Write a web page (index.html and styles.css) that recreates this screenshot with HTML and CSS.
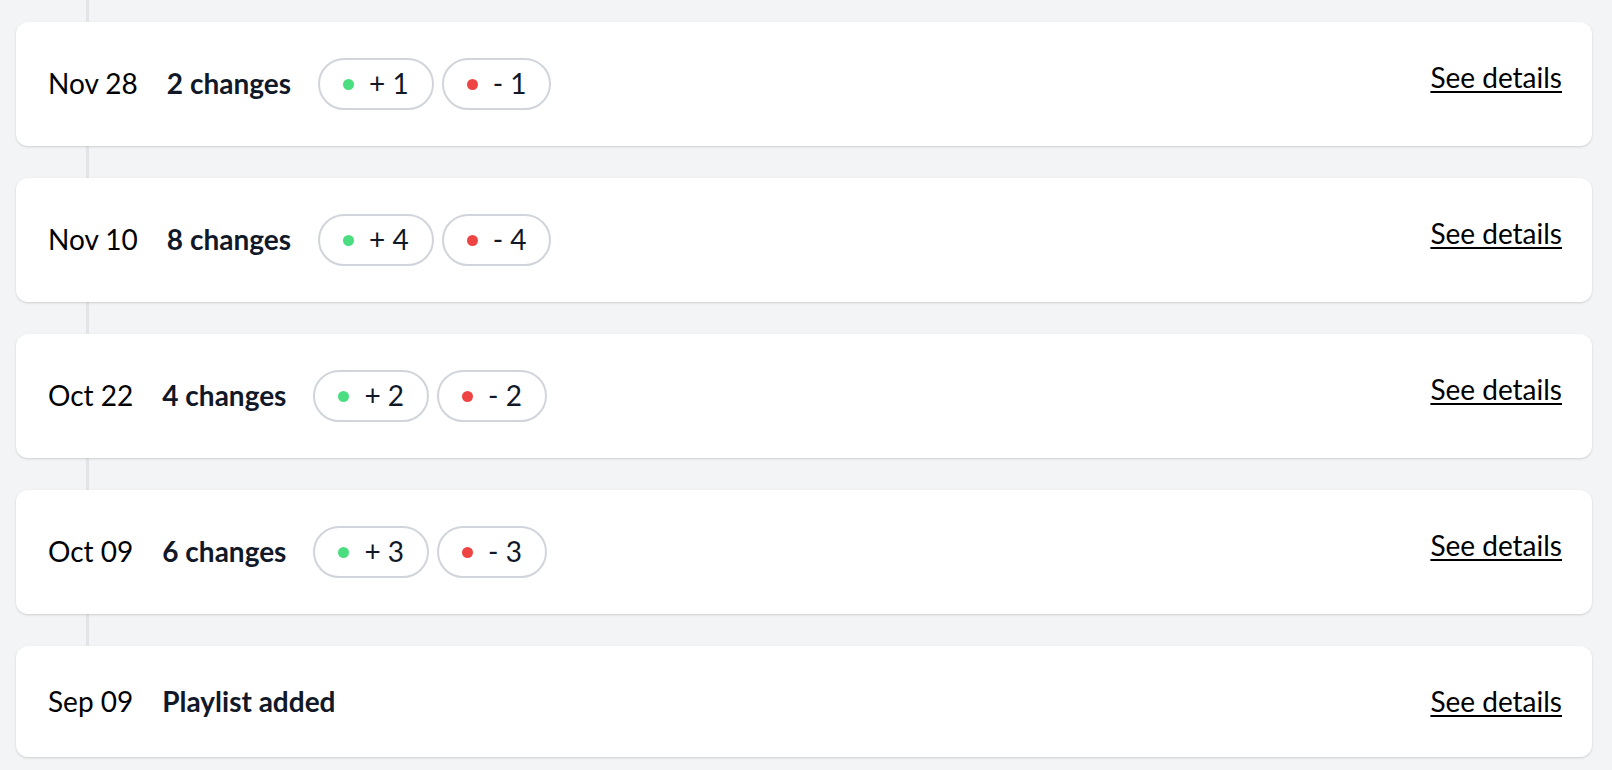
FILE: index.html
```html
<!DOCTYPE html>
<html lang="en">
<head>
<meta charset="utf-8">
<title>Playlist history</title>
<link rel="stylesheet" href="styles.css">
</head>
<body>
<main class="timeline">
  <div class="card">
    <div class="card-main">
      <span class="date">Nov 28</span>
      <span class="summary">2 changes</span>
      <div class="badges">
        <span class="badge"><span class="dot dot-add"></span>+ 1</span>
        <span class="badge"><span class="dot dot-remove"></span>- 1</span>
      </div>
    </div>
    <a class="details" href="#">See details</a>
  </div>
  <div class="card">
    <div class="card-main">
      <span class="date">Nov 10</span>
      <span class="summary">8 changes</span>
      <div class="badges">
        <span class="badge"><span class="dot dot-add"></span>+ 4</span>
        <span class="badge"><span class="dot dot-remove"></span>- 4</span>
      </div>
    </div>
    <a class="details" href="#">See details</a>
  </div>
  <div class="card">
    <div class="card-main">
      <span class="date">Oct 22</span>
      <span class="summary">4 changes</span>
      <div class="badges">
        <span class="badge"><span class="dot dot-add"></span>+ 2</span>
        <span class="badge"><span class="dot dot-remove"></span>- 2</span>
      </div>
    </div>
    <a class="details" href="#">See details</a>
  </div>
  <div class="card">
    <div class="card-main">
      <span class="date">Oct 09</span>
      <span class="summary">6 changes</span>
      <div class="badges">
        <span class="badge"><span class="dot dot-add"></span>+ 3</span>
        <span class="badge"><span class="dot dot-remove"></span>- 3</span>
      </div>
    </div>
    <a class="details" href="#">See details</a>
  </div>
  <div class="card">
    <div class="card-main">
      <span class="date">Sep 09</span>
      <span class="summary">Playlist added</span>
    </div>
    <a class="details" href="#">See details</a>
  </div>
</main>
</body>
</html>
```

FILE: styles.css
```css
html, body {
  margin: 0;
  padding: 0;
  background: #f3f4f6;
}

body {
  font-family: Lato, "Liberation Sans", sans-serif;
  font-size: 28px;
  line-height: 1.4;
  color: #000;
}

.timeline {
  position: relative;
  display: flex;
  flex-direction: column;
  gap: 32px;
  padding: 22px 20px 13px 16px;
}

.timeline::before {
  content: "";
  position: absolute;
  top: 0;
  bottom: 100px;
  left: 86px;
  width: 3px;
  background: #e2e4e8;
}

.card {
  position: relative;
  display: flex;
  justify-content: space-between;
  align-items: flex-start;
  background: #fff;
  border-radius: 12px;
  padding: 36px 30px 36px 32px;
  box-shadow: 0 1px 3px rgba(0, 0, 0, 0.1), 0 1px 2px rgba(0, 0, 0, 0.06);
}

.card-main {
  display: flex;
  align-items: center;
  min-height: 39px;
}

.date {
  margin-right: 29px;
}

.summary {
  font-weight: 700;
  color: #111827;
  margin-right: 27px;
}

.badges {
  display: flex;
  gap: 8px;
}

.badge {
  display: inline-flex;
  align-items: center;
  gap: 15px;
  height: 52px;
  box-sizing: border-box;
  padding: 0 23px 0 23px;
  border: 2px solid #d1d5db;
  border-radius: 999px;
  color: #111827;
}

.dot {
  width: 11px;
  height: 11px;
  border-radius: 50%;
}

.dot-add {
  background: #4ade80;
}

.dot-remove {
  background: #ef4444;
}

.details {
  color: #000;
  text-decoration: underline;
  text-underline-offset: 3px;
}
```
